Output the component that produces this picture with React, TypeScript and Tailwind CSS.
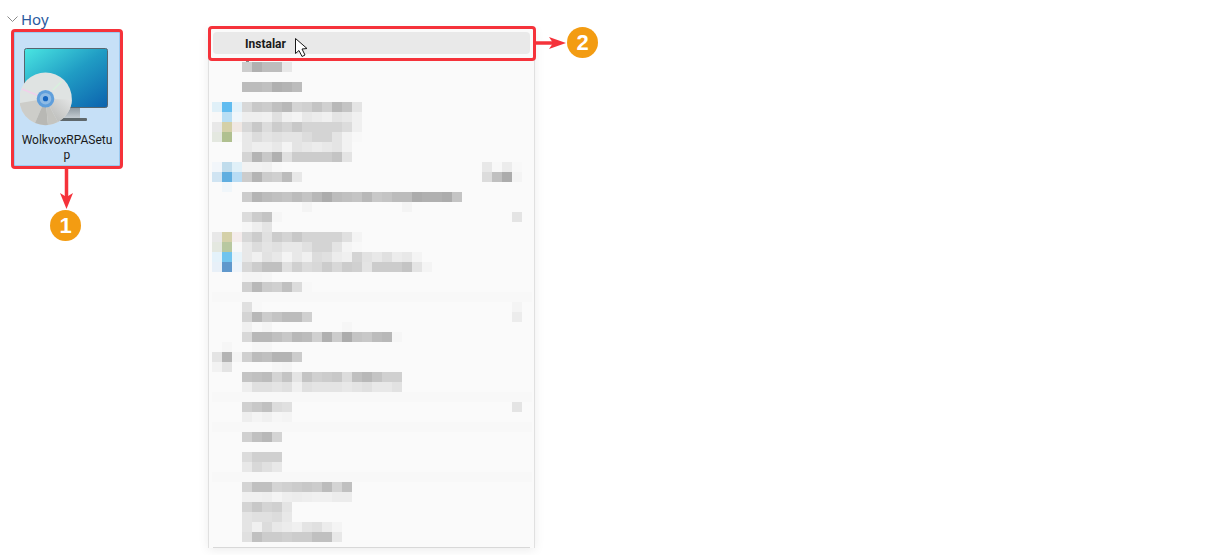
const rows: string[] = [
  "+3 cd b0 bd bd e8",
  "",
  "+3 bc bc c0 b0 b4 bc",
  "",
  "e0f0f8 60bcf0 e4f2fa d8 c8 cc c0 b8 d4 d0 c4 d0 b8 c4 e4",
  "f8 b8def4 f0f6fa ee ee f0 e0 f0 f4 e8 ec f0 e4 e8 f0",
  "e8 d4d0a8 f0e8e4 d8 c8 dc cc d4 c8 d4 d4 d4 d4 dc f0",
  "e4e8e0 b0c090 f8 e8 dc e4 e0 e4 e4 dc d4 d4 e4 f2 f8",
  "+3 e8 ee ee e8 f4 e4 e8 ec e8 e4 f2",
  "+3 d4 b4 c8 b0 e0 cc cc cc cc c4 e4",
  "f2f6fa c0dcec e0f0f8 f2 f2 f0 f8 +20 e8 f8 ec f8",
  "d0e4f2 60aee0 b8dcf4 cc b4 cc d0 bc e8 +18 dc c0 ac f4",
  "+1 f0f6fa",
  "+3 cc b4 bc c0 c4 bc c4 b8 ac bc c0 c4 b8 c8 c4 bc bc ac b0 b0 ac c4",
  "+9 f4 +9 f4",
  "+3 dc cc c4 f6 +23 e4",
  "+3 f6 ee e4",
  "e8 d4d0a8 f4ecec d8 cc e0 cc d4 c8 d4 d4 d4 d4 e0 f4",
  "e4e8e0 b8c8a0 f8 e8 dc e4 e0 e8 e8 e0 d4 d4 e4 f4 f8",
  "e4f2fa 70c4ee e8f4fa e8 f0 e2 e8 f4 e8 f0 dc e0 ec f0 d4 e2 e8 e0 ec e8 f4",
  "e8f0f8 6098cc eef4fa d8 cc c0 c0 e0 d0 dc d8 cc d8 cc d0 e4 cc cc cc c4 e4 f4",
  "+3 f4 f4 f6",
  "+3 d0 b8 cc d0 c0 dc f8",
  "=",
  "+3 e0 f8 +25 f4",
  "+3 d4 b8 cc c4 bc bc d0 +20 ec",
  "+3 f0 f8 f4 +7 f6",
  "+3 d8 b8 b8 c0 c8 b8 bc d0 b0 cc ac c4 c8 bc b8 f6",
  "+1 f6 +2 f6 f6",
  "e4 b4 f4 d0 bc c0 b4 b4 cc",
  "f2 e4 +4 f6 f4",
  "+3 c4 c0 bc d4 c4 e4 c4 d0 cc c8 dc c0 b8 c4 d0 d0",
  "+3 ee e0 e0 e4 e0 f0 e0 e4 e4 e4 e8 e4 e0 e8 e8 e2",
  "=",
  "+3 d0 c8 c0 dc e0 +22 e4",
  "+3 ee f4 f0 f6 f4",
  "=",
  "+3 d0 c0 b8 d4",
  "",
  "+3 dc d0 d0 d0",
  "+3 e8 d8 e0 e8",
  "=",
  "+3 d4 c0 c0 d4 d0 cc c8 cc bc d4 c0",
  "+3 f0 f0 ee f4 ee ec ee f0 f0 ec ec",
  "+3 d4 c8 d4 d0 e4",
  "+3 e4 e0 e0 dc e8",
  "+3 e4 f0 dc e8 ec f0 e4 e0 ec f4",
  "+3 e0 c0 cc cc d0 cc cc c0 c0 e8",
];

function MosaicRow({ spec }: { spec: string }) {
  if (spec === "=") return <div className="h-[10px] w-[320px] bg-[#f8f8f8]" />;
  const cells: React.ReactNode[] = [];
  spec
    .split(" ")
    .filter(Boolean)
    .forEach((t, i) => {
      if (t[0] === "+") {
        cells.push(<div key={i} className="shrink-0" style={{ width: Number(t.slice(1)) * 10 }} />);
      } else {
        const color = t.length === 2 ? `#${t}${t}${t}` : `#${t}`;
        cells.push(<div key={i} className="h-[10px] w-[10px] shrink-0" style={{ backgroundColor: color }} />);
      }
    });
  return <div className="flex h-[10px]">{cells}</div>;
}

function SetupIcon() {
  return (
    <svg width="92" height="80" viewBox="20 46 92 80" className="-ml-[2px]">
      <defs>
        <linearGradient id="scr" x1="0" y1="0" x2="1" y2="1">
          <stop offset="0" stopColor="#4ae6e2" />
          <stop offset="0.5" stopColor="#209cc4" />
          <stop offset="1" stopColor="#0c62ae" />
        </linearGradient>
        <linearGradient id="rw" x1="0" y1="1" x2="1" y2="0">
          <stop offset="0" stopColor="#b4b4b1" />
          <stop offset="1" stopColor="#e4e6e6" />
        </linearGradient>
        <linearGradient id="neck" x1="0" y1="0" x2="0" y2="1">
          <stop offset="0" stopColor="#8f9aa2" />
          <stop offset="1" stopColor="#c4ccd2" />
        </linearGradient>
      </defs>
      <rect x="24.5" y="48.5" width="83" height="59" rx="2" fill="url(#scr)" stroke="#56666f" />
      <rect x="62" y="108" width="18" height="10" fill="url(#neck)" />
      <rect x="58" y="118" width="29" height="3" rx="1" fill="#5f686c" />
      <circle cx="45.5" cy="98.7" r="26.3" fill="#dfe3e2" />
      <path d="M45.5 98.7 L19.6 103 A26.3 26.3 0 0 0 35 123 Z" fill="#cdcdc9" />
      <path d="M45.5 98.7 L35 123 A26.3 26.3 0 0 0 48 125 Z" fill="#b8b8b4" />
      <path d="M45.5 98.7 L48 125 A26.3 26.3 0 0 0 58 122 Z" fill="#c4c4c0" />
      <path d="M45.5 98.7 L58 122 A26.3 26.3 0 0 0 71.8 99.5 Z" fill="url(#rw)" />
      <path d="M22 89 L38 95.5" stroke="#f2d0ea" strokeWidth="1.6" />
      <path d="M53 90 L62 81" stroke="#d8f0dc" strokeWidth="1.6" />
      <circle cx="45.5" cy="98.7" r="8.8" fill="#5f9fdc" />
      <circle cx="45.5" cy="98.7" r="5.8" fill="#8fbbe4" />
      <circle cx="45.5" cy="98.7" r="2.6" fill="#1565c0" />
    </svg>
  );
}

export default function App() {
  return (
    <div className="relative flex h-[555px] w-[1206px] items-start overflow-hidden bg-white font-['Open_Sans','Noto_Sans',sans-serif]">
      <div className="w-[208px] shrink-0">
        <div className="mb-[4px] mt-[10px] flex h-[18px] items-center pl-[7px]">
          <svg width="11" height="6" viewBox="0 0 11 6" className="mr-[3px]">
            <path d="M0.5 0.5 L5.5 5.5 L10.5 0.5" fill="none" stroke="#8a8a8a" />
          </svg>
          <span className="font-['Noto_Sans',sans-serif] text-[15px] leading-[18px] text-[#2a5a9e]">Hoy</span>
        </div>
        <div className="ml-[14px] flex h-[134px] w-[106px] flex-col items-center border border-[#9ccbf1] bg-[#c6e0f7] pt-[13px]">
          <SetupIcon />
          <div className="mt-[7px] text-center font-['Roboto',sans-serif] text-[12px] leading-[15px] text-[#1a1a1a]">
            WolkvoxRPASetu
            <br />p
          </div>
        </div>
      </div>

      <div className="mt-[28px] w-[327px] shrink-0 border border-b-0 border-[#e0e0e0] bg-[#fafafa] pt-[3px] shadow-[0_2px_10px_rgba(0,0,0,0.08)]">
        <div className="ml-[4px] flex h-[22px] w-[317px] items-center rounded-[4px] bg-[#e9e9e9] pl-[32px] pt-px font-['Roboto',sans-serif] text-[12px] font-bold text-[#1a1a1a]">
          Instalar
        </div>
        <div className="ml-[37px] mt-[7px] h-px w-[3px] bg-[#888888]" />
        <div className="pl-[3px]">
          {rows.map((r, i) => (
            <MosaicRow key={i} spec={r} />
          ))}
        </div>
        <div className="ml-[4px] mt-[5px] h-px w-[317px] bg-[#d8d8d8]" />
      </div>

      <div className="absolute left-[11px] top-[29px] h-[140px] w-[112px] rounded-[4px] border-[3px] border-[#f5323a]" />
      <div className="absolute left-[208px] top-[26px] h-[35px] w-[328px] rounded-[4px] border-[3px] border-[#f5323a]" />

      <svg className="absolute left-[56px] top-[169px]" width="22" height="42" viewBox="0 0 22 42">
        <path d="M10.5 0 V30" stroke="#f5323a" strokeWidth="3.5" />
        <path d="M4 24 L10.5 28 L17 24 L10.5 40 Z" fill="#f5323a" />
      </svg>
      <svg className="absolute left-[536px] top-[32px]" width="32" height="22" viewBox="0 0 32 22">
        <path d="M0 11 H18" stroke="#f5323a" strokeWidth="3.5" />
        <path d="M13 5 L17 11 L13 17 L30 11 Z" fill="#f5323a" />
      </svg>

      <div className="absolute left-[50px] top-[210px] flex h-[31px] w-[31px] items-center justify-center rounded-full bg-[#f39c12] font-['Liberation_Sans',sans-serif] text-[22px] font-bold text-white">
        1
      </div>
      <div className="absolute left-[567px] top-[27px] flex h-[31px] w-[31px] items-center justify-center rounded-full bg-[#f39c12] font-['Liberation_Sans',sans-serif] text-[22px] font-bold text-white">
        2
      </div>

      <svg className="absolute left-[294px] top-[37px]" width="15" height="21" viewBox="0 0 15 21">
        <path d="M1.5 1.5 V16.5 L5 13.5 L8 19.5 L11 18 L8 12 L13 11.5 Z" fill="#fff" stroke="#1a1a1a" strokeWidth="1" strokeLinejoin="round" />
      </svg>
    </div>
  );
}
